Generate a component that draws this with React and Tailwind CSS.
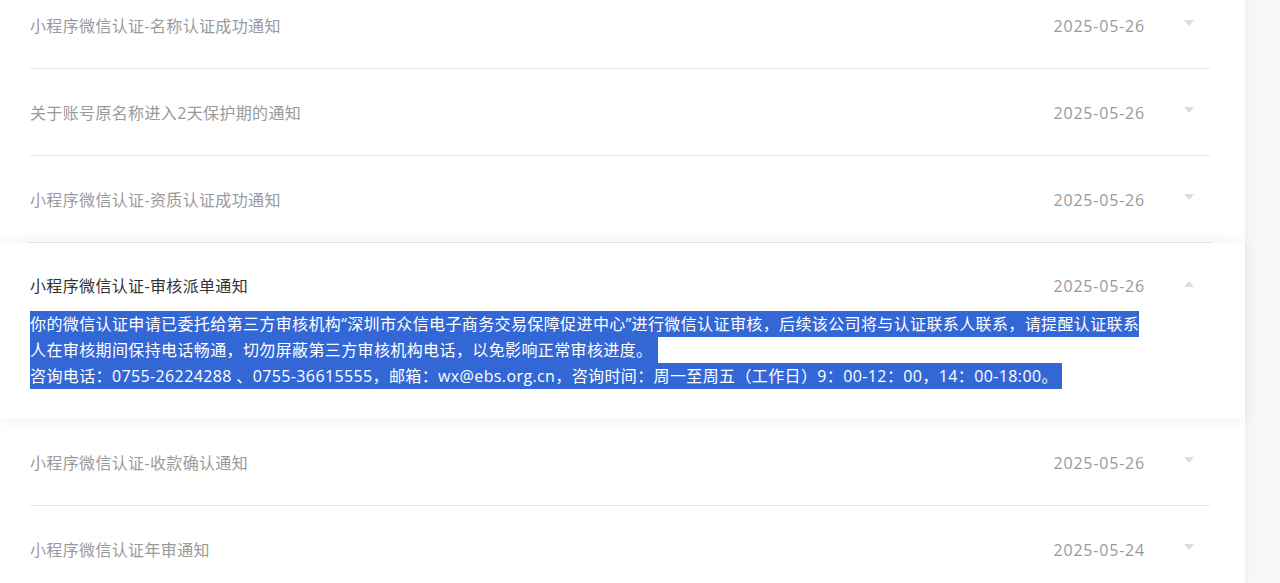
import React from 'react';

const notices = [
  { title: '小程序微信认证-名称认证成功通知', date: '2025-05-26' },
  { title: '关于账号原名称进入2天保护期的通知', date: '2025-05-26' },
  { title: '小程序微信认证-资质认证成功通知', date: '2025-05-26' },
  {
    title: '小程序微信认证-审核派单通知',
    date: '2025-05-26',
    open: true,
    lines: [
      '你的微信认证申请已委托给第三方审核机构“深圳市众信电子商务交易保障促进中心”进行微信认证审核，后续该公司将与认证联系人联系，请提醒认证联系',
      '人在审核期间保持电话畅通，切勿屏蔽第三方审核机构电话，以免影响正常审核进度。',
      '咨询电话：0755-26224288 、0755-36615555，邮箱：wx@ebs.org.cn，咨询时间：周一至周五（工作日）9：00-12：00，14：00-18:00。',
    ],
  },
  { title: '小程序微信认证-收款确认通知', date: '2025-05-26' },
  { title: '小程序微信认证年审通知', date: '2025-05-24' },
];

const Caret = ({ up }) => (
  <svg width="10" height="6" viewBox="0 0 10 6" className="ml-[39px] mr-[16px] -mt-[4px]">
    {up ? <path d="M0 6 L5 0 L10 6 Z" fill="#dcdcdc" /> : <path d="M0 0 L10 0 L5 6 Z" fill="#dcdcdc" />}
  </svg>
);

const Row = ({ item, first }) => (
  <div className={`ml-[30px] mr-[35px] h-[87px] flex items-center border-b border-[#e6e6e6] ${first ? '-mt-[18px]' : ''}`}>
    <span className="flex-1 pt-[2px] text-[16px] leading-[24px] tracking-[0.35px] text-[#9a9a9a]">{item.title}</span>
    <span className="pt-[2px] text-[16px] leading-[24px] tracking-[0.8px] text-[#9a9a9a]">{item.date}</span>
    <Caret />
  </div>
);

const OpenRow = ({ item }) => (
  <div className="relative z-10 bg-white shadow-[0_0_16px_rgba(0,0,0,0.07)] pt-[31px] pb-[30px]">
    <div className="ml-[30px] mr-[35px] flex items-center">
      <span className="flex-1 text-[16px] leading-[24px] tracking-[0.35px] text-[#333333]">{item.title}</span>
      <span className="text-[16px] leading-[24px] tracking-[0.8px] text-[#9a9a9a]">{item.date}</span>
      <Caret up />
    </div>
    <div className="mx-[30px] mt-[13px] text-[16px] leading-[26px] tracking-[0.38px] text-white">
      {item.lines.map((l, i) => (
        <div key={i} className={`w-fit bg-[#3367d6] whitespace-nowrap ${i === 1 ? 'pr-[6px]' : i === 2 ? 'pr-[4px]' : ''}`}>
          {l}
        </div>
      ))}
    </div>
  </div>
);

export default function App() {
  return (
    <div
      className="flex h-[583px] overflow-hidden bg-[#f6f7f9]"
      style={{ fontFamily: '"Open Sans", "Noto Sans CJK SC", sans-serif' }}
    >
      <div className="w-[1245px] shrink-0 bg-white shadow-[0_0_8px_rgba(0,0,0,0.05)] relative">
        {notices.map((n, i) =>
          n.open ? <OpenRow key={i} item={n} /> : <Row key={i} item={n} first={i === 0} />
        )}
      </div>
      <div className="flex-1" />
    </div>
  );
}
